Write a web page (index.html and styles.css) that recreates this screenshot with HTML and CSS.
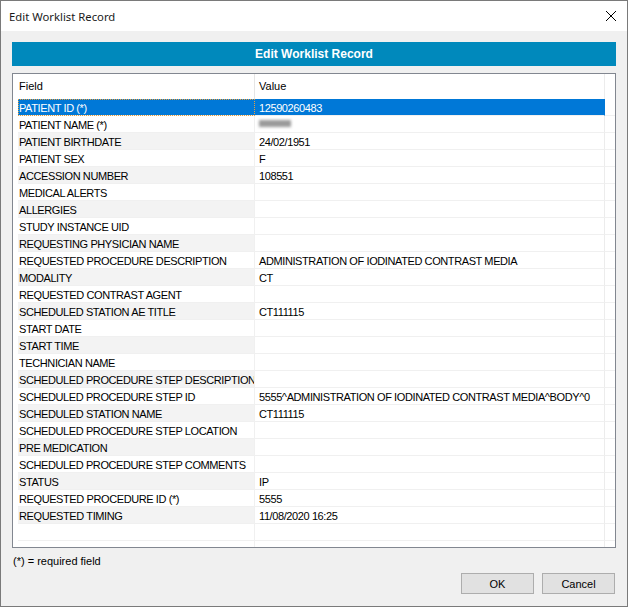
FILE: index.html
```html
<!DOCTYPE html>
<html lang="en">
<head>
    <meta charset="UTF-8">
    <title>Edit Worklist Record</title>
    <link rel="stylesheet" href="styles.css">
</head>
<body>
    <div class="window">
        <div class="titlebar">
            <span class="title">Edit Worklist Record</span>
            <svg class="close" width="12" height="12" viewBox="0 0 12 12">
                <path d="M1 1 L11 11 M11 1 L1 11" stroke="#000" stroke-width="1" fill="none"/>
            </svg>
        </div>

        <div class="content">
            <div class="banner">Edit Worklist Record</div>

            <div class="list">
                <div class="row head">
                    <div class="cell field">Field</div>
                    <div class="cell value">Value</div>
                    <div class="cell filler"></div>
                </div>
                <div class="row selected">
                    <div class="cell field">PATIENT ID (*)</div>
                    <div class="cell value">12590260483</div>
                    <div class="cell filler"></div>
                </div>
                <div class="row">
                    <div class="cell field">PATIENT NAME (*)</div>
                    <div class="cell value"><span class="blurred"></span></div>
                    <div class="cell filler"></div>
                </div>
                <div class="row alt">
                    <div class="cell field">PATIENT BIRTHDATE</div>
                    <div class="cell value">24/02/1951</div>
                    <div class="cell filler"></div>
                </div>
                <div class="row">
                    <div class="cell field">PATIENT SEX</div>
                    <div class="cell value">F</div>
                    <div class="cell filler"></div>
                </div>
                <div class="row alt">
                    <div class="cell field">ACCESSION NUMBER</div>
                    <div class="cell value">108551</div>
                    <div class="cell filler"></div>
                </div>
                <div class="row">
                    <div class="cell field">MEDICAL ALERTS</div>
                    <div class="cell value"></div>
                    <div class="cell filler"></div>
                </div>
                <div class="row alt">
                    <div class="cell field">ALLERGIES</div>
                    <div class="cell value"></div>
                    <div class="cell filler"></div>
                </div>
                <div class="row">
                    <div class="cell field">STUDY INSTANCE UID</div>
                    <div class="cell value"></div>
                    <div class="cell filler"></div>
                </div>
                <div class="row alt">
                    <div class="cell field">REQUESTING PHYSICIAN NAME</div>
                    <div class="cell value"></div>
                    <div class="cell filler"></div>
                </div>
                <div class="row">
                    <div class="cell field">REQUESTED PROCEDURE DESCRIPTION</div>
                    <div class="cell value">ADMINISTRATION OF IODINATED CONTRAST MEDIA</div>
                    <div class="cell filler"></div>
                </div>
                <div class="row alt">
                    <div class="cell field">MODALITY</div>
                    <div class="cell value">CT</div>
                    <div class="cell filler"></div>
                </div>
                <div class="row">
                    <div class="cell field">REQUESTED CONTRAST AGENT</div>
                    <div class="cell value"></div>
                    <div class="cell filler"></div>
                </div>
                <div class="row alt">
                    <div class="cell field">SCHEDULED STATION AE TITLE</div>
                    <div class="cell value">CT111115</div>
                    <div class="cell filler"></div>
                </div>
                <div class="row">
                    <div class="cell field">START DATE</div>
                    <div class="cell value"></div>
                    <div class="cell filler"></div>
                </div>
                <div class="row alt">
                    <div class="cell field">START TIME</div>
                    <div class="cell value"></div>
                    <div class="cell filler"></div>
                </div>
                <div class="row">
                    <div class="cell field">TECHNICIAN NAME</div>
                    <div class="cell value"></div>
                    <div class="cell filler"></div>
                </div>
                <div class="row alt">
                    <div class="cell field">SCHEDULED PROCEDURE STEP DESCRIPTION</div>
                    <div class="cell value"></div>
                    <div class="cell filler"></div>
                </div>
                <div class="row">
                    <div class="cell field">SCHEDULED PROCEDURE STEP ID</div>
                    <div class="cell value">5555^ADMINISTRATION OF IODINATED CONTRAST MEDIA^BODY^0</div>
                    <div class="cell filler"></div>
                </div>
                <div class="row alt">
                    <div class="cell field">SCHEDULED STATION NAME</div>
                    <div class="cell value">CT111115</div>
                    <div class="cell filler"></div>
                </div>
                <div class="row">
                    <div class="cell field">SCHEDULED PROCEDURE STEP LOCATION</div>
                    <div class="cell value"></div>
                    <div class="cell filler"></div>
                </div>
                <div class="row alt">
                    <div class="cell field">PRE MEDICATION</div>
                    <div class="cell value"></div>
                    <div class="cell filler"></div>
                </div>
                <div class="row">
                    <div class="cell field">SCHEDULED PROCEDURE STEP COMMENTS</div>
                    <div class="cell value"></div>
                    <div class="cell filler"></div>
                </div>
                <div class="row alt">
                    <div class="cell field">STATUS</div>
                    <div class="cell value">IP</div>
                    <div class="cell filler"></div>
                </div>
                <div class="row">
                    <div class="cell field">REQUESTED PROCEDURE ID (*)</div>
                    <div class="cell value">5555</div>
                    <div class="cell filler"></div>
                </div>
                <div class="row alt">
                    <div class="cell field">REQUESTED TIMING</div>
                    <div class="cell value">11/08/2020 16:25</div>
                    <div class="cell filler"></div>
                </div>
                <div class="row">
                    <div class="cell field"></div>
                    <div class="cell value"></div>
                    <div class="cell filler"></div>
                </div>
                <div class="row last">
                    <div class="cell field"></div>
                    <div class="cell value"></div>
                    <div class="cell filler"></div>
                </div>
            </div>

            <div class="note">(*) = required field</div>

            <div class="buttons">
                <button class="btn">OK</button>
                <button class="btn">Cancel</button>
            </div>
        </div>
    </div>
</body>
</html>
```

FILE: styles.css
```css
html, body {
    margin: 0;
    padding: 0;
}

body {
    width: 628px;
    height: 607px;
    overflow: hidden;
    font-family: "Liberation Sans", Arial, sans-serif;
    font-size: 11px;
    color: #000;
}

.window {
    box-sizing: border-box;
    width: 628px;
    height: 607px;
    border: 1px solid #7a7a7a;
    background-color: #f0f0f0;
    display: flex;
    flex-direction: column;
}

.titlebar {
    height: 30px;
    background-color: #fff;
    display: flex;
    align-items: center;
    justify-content: space-between;
    padding: 0 10px 0 8px;
}

.title {
    font-family: "Noto Sans", "Open Sans", sans-serif;
    font-size: 11.3px;
    color: #1a1a1a;
}

.close {
    display: block;
}

.content {
    flex: 1;
    padding: 11px 11px 0 11px;
    display: flex;
    flex-direction: column;
}

.banner {
    height: 24px;
    background-color: #0089bc;
    color: #fff;
    font-family: "Liberation Sans", Arial, sans-serif;
    font-weight: bold;
    font-size: 12px;
    line-height: 24px;
    text-align: center;
}

.list {
    margin-top: 7px;
    height: 475px;
    box-sizing: border-box;
    border: 1px solid #828790;
    background-color: #fff;
    padding-left: 5px;
    overflow: hidden;
    letter-spacing: -0.4px;
}

.row {
    display: grid;
    grid-template-columns: 237px 350px 1fr;
    height: 17px;
}

.cell {
    box-sizing: border-box;
    border-bottom: 1px solid #f0f0f0;
    line-height: 18px;
    white-space: nowrap;
    overflow: hidden;
}

.field {
    padding-left: 1px;
    border-right: 1px solid #f0f0f0;
}

.value {
    padding-left: 4px;
    border-right: 1px solid #ececec;
}

.row.alt .field {
    background-color: #f3f3f3;
}

.row.head {
    height: 25px;
}

.row.head .cell {
    line-height: 25px;
    border-bottom: none;
    letter-spacing: 0;
}

.row.head .field {
    border-right: 1px solid #e5e5e5;
}

.row.selected .field,
.row.selected .value {
    background-color: #0078d7;
    color: #fff;
    border-right-color: #0078d7;
}

.row.selected .field {
    outline: 1px dotted #e8a040;
    outline-offset: -1px;
}

.blurred {
    display: inline-block;
    width: 32px;
    height: 7px;
    margin-top: 4px;
    background-color: #9a9a9a;
    filter: blur(1.5px);
    vertical-align: top;
}

.note {
    margin-top: 6px;
    padding-left: 1px;
    height: 14px;
    line-height: 14px;
}

.buttons {
    display: flex;
    justify-content: flex-end;
    gap: 8px;
    margin-top: 5px;
    padding-right: 1px;
}

.btn {
    width: 73px;
    height: 21px;
    background-color: #e1e1e1;
    border: 1px solid #adadad;
    font-family: "Liberation Sans", Arial, sans-serif;
    font-size: 11px;
    color: #000;
    padding: 0;
}
```
